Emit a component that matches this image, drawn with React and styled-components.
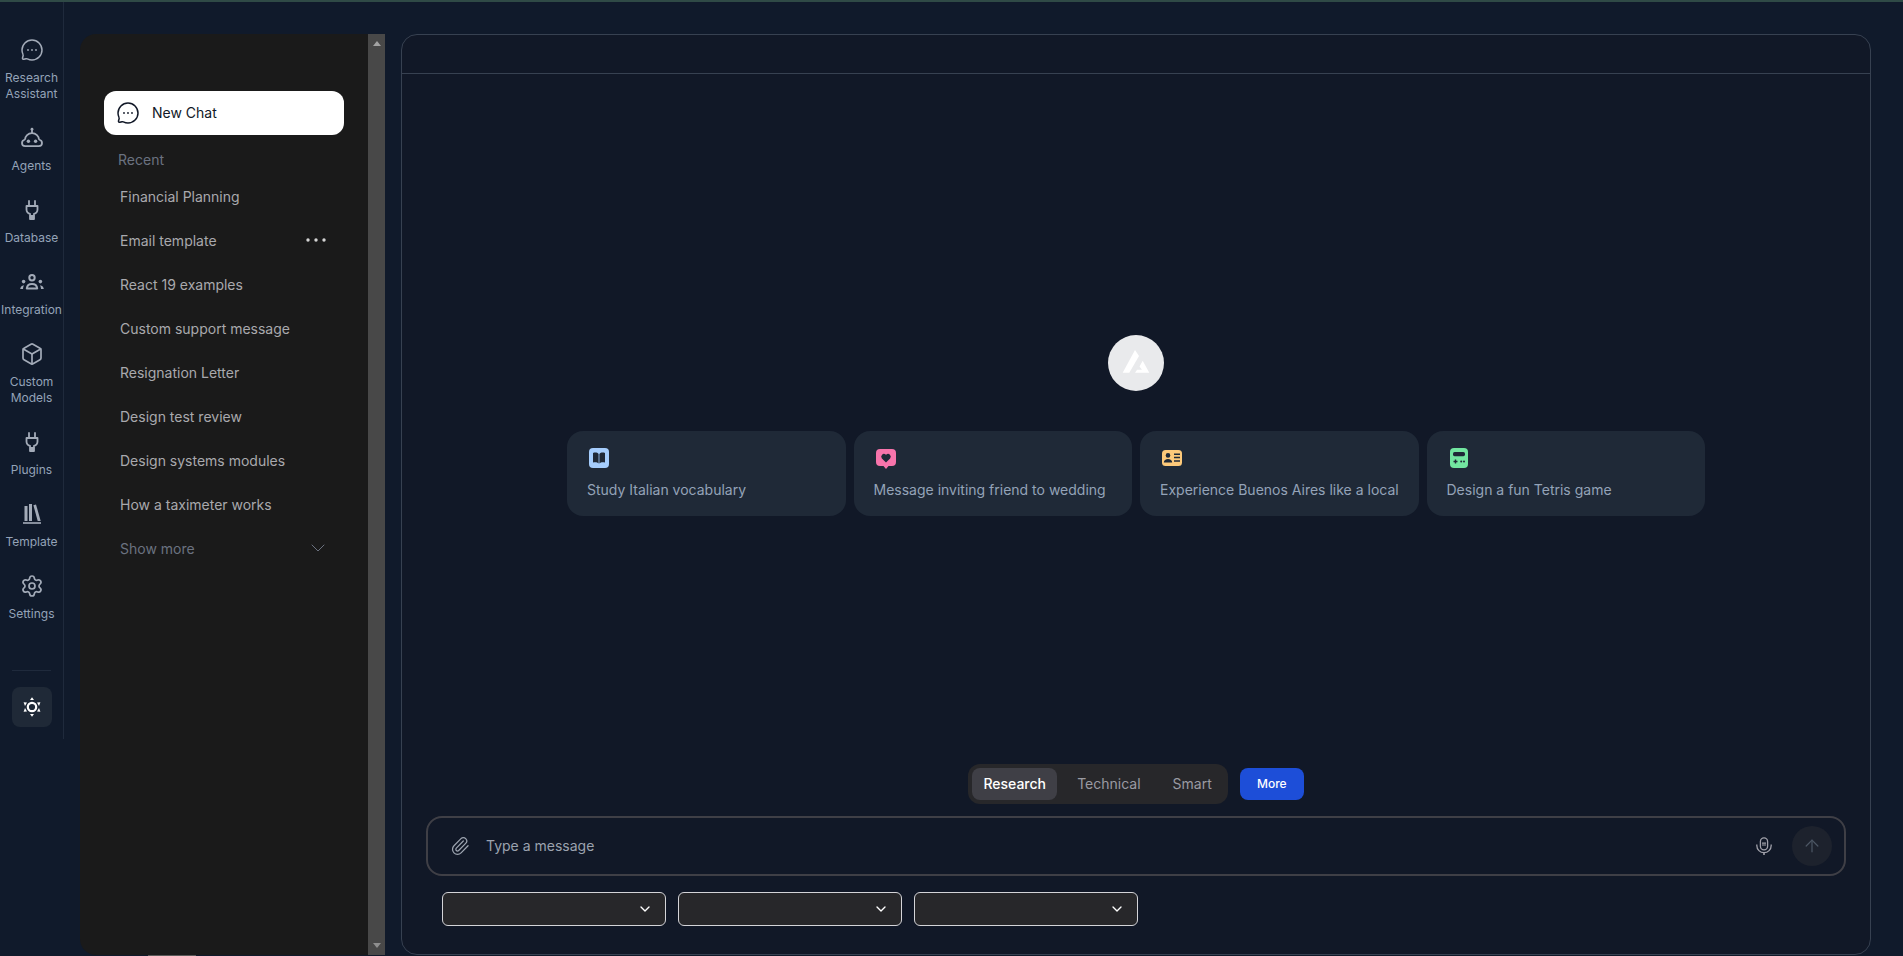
import React from "react";
import styled, { createGlobalStyle } from "styled-components";
import { Box, Settings, Paperclip, ArrowUp, ChevronDown } from "lucide-react";

const Global = createGlobalStyle`
  html, body { margin: 0; padding: 0; height: 100%; overflow: hidden; background: #101a2b; }
  body { font-family: "Inter", "Liberation Sans", sans-serif; }
  * { box-sizing: border-box; }
  button { font-family: inherit; border: 0; padding: 0; }
`;

const Page = styled.div`
  height: 956px;
  display: flex;
  flex-direction: column;
`;
const TopStrip = styled.div`
  height: 2px;
  flex: none;
  background: #2f4a46;
`;
const Layout = styled.div`
  flex: 1;
  display: flex;
  align-items: flex-start;
  min-height: 0;
`;
const Rail = styled.nav`
  width: 64px;
  flex: none;
  border-right: 1px solid #1f2a3c;
  padding: 36px 0 12px;
  display: flex;
  flex-direction: column;
  align-items: center;
`;
const RailList = styled.div`
  display: flex;
  flex-direction: column;
  align-items: center;
  gap: 24px;
  width: 100%;
`;
const RailItem = styled.div`
  display: flex;
  flex-direction: column;
  align-items: center;
  gap: 8px;
  color: #a3abb8;
  width: 100%;
`;
const RailLabel = styled.span`
  font-size: 12px;
  line-height: 16px;
  color: #94a3b8;
  text-align: center;
  white-space: pre-line;
`;
const RailDivider = styled.div`
  width: 39px;
  height: 1px;
  background: #1f2a3c;
  margin: 48px 0 16px;
`;
const ThemeButton = styled.button`
  width: 40px;
  height: 40px;
  border-radius: 8px;
  background: #1f2937;
  color: #fff;
  display: flex;
  align-items: center;
  justify-content: center;
`;
const SideColumn = styled.div`
  flex: none;
  margin: 32px 16px 0;
  width: 305px;
`;
const SidePanel = styled.aside`
  height: 921px;
  display: flex;
  border-radius: 16px 0 0 16px;
  overflow: hidden;
  background: #1a1a1a;
`;
const SideContent = styled.div`
  flex: 1;
  padding: 57px 24px 0;
  min-width: 0;
`;
const NewChat = styled.button`
  width: 240px;
  height: 44px;
  border-radius: 12px;
  background: #fff;
  color: #111827;
  display: flex;
  align-items: center;
  gap: 12px;
  padding-left: 12px;
  font-size: 14px;
  font-weight: 400;
  line-height: 20px;
`;
const RecentLabel = styled.div`
  font-size: 14px;
  line-height: 20px;
  color: #6b7280;
  margin: 15px 0 4px 14px;
`;
const HistoryRow = styled.div`
  height: 44px;
  display: flex;
  align-items: center;
  justify-content: space-between;
  padding: 0 16px;
  font-size: 14px;
  color: ${(p) => (p.$muted ? "#6b7280" : "#a9a9ad")};
`;
const RowIcon = styled.span`
  width: 24px;
  height: 24px;
  display: flex;
  align-items: center;
  justify-content: center;
  margin-right: ${(p) => (p.$muted ? "-2px" : "0")};
  color: ${(p) => (p.$muted ? "#6b7280" : "#d4d4d4")};
`;
const Scrollbar = styled.div`
  width: 17px;
  flex: none;
  background: #484848;
  display: flex;
  flex-direction: column;
  justify-content: space-between;
  align-items: center;
  padding: 7px 0;
`;
const ScrollArrow = styled.span`
  width: 0;
  height: 0;
  border-left: 4px solid transparent;
  border-right: 4px solid transparent;
  ${(p) => (p.$down ? "border-top: 5px solid #8f8f8f;" : "border-bottom: 5px solid #a3a3a3;")}
`;
const BottomThumb = styled.div`
  width: 48px;
  height: 1px;
  margin-left: 68px;
  background: #5a5a5a;
`;
const Main = styled.main`
  flex: none;
  width: 1470px;
  height: 921px;
  margin-top: 32px;
  border: 1px solid #374151;
  border-radius: 16px;
  background: #111827;
  display: flex;
  flex-direction: column;
  overflow: hidden;
`;
const MainHeader = styled.div`
  height: 39px;
  flex: none;
  border-bottom: 1px solid #374151;
`;
const Stage = styled.div`
  flex: 1;
  display: flex;
  flex-direction: column;
  align-items: center;
  padding-top: 261px;
  min-height: 0;
`;
const LogoDisc = styled.div`
  width: 56px;
  height: 56px;
  border-radius: 50%;
  background: #e9eaec;
  margin-bottom: 40px;
`;
const Cards = styled.div`
  display: flex;
  gap: 8px;
`;
const Card = styled.div`
  width: 278.5px;
  height: 85px;
  border-radius: 16px;
  background: #1f2937;
  padding: 15px 20px 0;
`;
const CardIcon = styled.div`
  width: 24px;
  height: 24px;
  margin-bottom: 10px;
`;
const CardText = styled.div`
  font-size: 14px;
  line-height: 20px;
  color: #94a3b8;
  white-space: nowrap;
`;
const Composer = styled.div`
  flex: none;
  padding: 0 24px 28px;
`;
const ModeRow = styled.div`
  display: flex;
  justify-content: center;
  align-items: center;
  gap: 12px;
  margin-bottom: 12px;
`;
const ModeTabs = styled.div`
  height: 40px;
  padding: 4px;
  background: #27272a;
  border-radius: 12px;
  display: flex;
  gap: 8px;
`;
const ModeTab = styled.button`
  height: 32px;
  padding: 0 ${(p) => (p.$active ? "11.2px" : "12px")};
  border-radius: 8px;
  font-size: 14px;
  line-height: 18px;
  font-weight: ${(p) => (p.$active ? 500 : 400)};
  color: ${(p) => (p.$active ? "#fff" : "#9a9aa2")};
  background: ${(p) => (p.$active ? "#3f3f46" : "transparent")};
`;
const MoreButton = styled.button`
  width: 64px;
  height: 32px;
  border-radius: 8px;
  background: #1d4ed8;
  color: #fff;
  font-size: 12px;
  line-height: 14px;
  font-weight: 500;
`;
const InputBar = styled.div`
  height: 60px;
  border: 2px solid #3f3f46;
  border-radius: 16px;
  display: flex;
  align-items: center;
  padding: 0 12px 0 22px;
  color: #9ca3af;
`;
const Placeholder = styled.span`
  flex: 1;
  margin-left: 16px;
  font-size: 14px;
  line-height: 18px;
  color: #9ca3af;
`;
const SendButton = styled.button`
  width: 40px;
  height: 40px;
  border-radius: 50%;
  background: #1d222d;
  color: #4b5563;
  margin-left: 18px;
  display: flex;
  align-items: center;
  justify-content: center;
`;
const Selects = styled.div`
  display: flex;
  gap: 12px;
  margin-top: 16px;
  padding-left: 16px;
`;
const SelectBox = styled.button`
  width: 224px;
  height: 34px;
  background: #27272a;
  border: 1px solid #d4d4d8;
  border-radius: 6px;
  color: #fff;
  display: flex;
  align-items: center;
  justify-content: flex-end;
  padding-right: 12px;
`;

const ChatIcon = ({ color = "currentColor" }) => (
  <svg width="24" height="24" viewBox="0 0 24 24" fill="none" stroke={color} strokeWidth="1.5">
    <path d="M12 22C17.5 22 22 17.5 22 12S17.5 2 12 2 2 6.5 2 12c0 1.6.4 3.1 1 4.5.2.4.2.8.1 1.2l-.6 2.3c-.2.8.5 1.5 1.3 1.3l2.3-.6c.4-.1.8-.1 1.2.1C8.9 21.6 10.4 22 12 22Z" strokeLinejoin="round" />
    <circle cx="8" cy="12" r=".9" fill={color} stroke="none" />
    <circle cx="12" cy="12" r=".9" fill={color} stroke="none" />
    <circle cx="16" cy="12" r=".9" fill={color} stroke="none" />
  </svg>
);
const RobotIcon = () => (
  <svg width="24" height="24" viewBox="0 0 24 24" fill="none" stroke="currentColor" strokeWidth="1.8">
    <circle cx="12" cy="3.2" r="1.4" fill="currentColor" stroke="none" />
    <path d="M12 4v3.5" />
    <path d="M5 13.8a7 6.6 0 0 1 14 0" />
    <path d="M5 13.5c-1.8.5-3 1.9-3 3.5 0 1.8 1.4 3.2 3.2 3.2h13.6c1.8 0 3.2-1.4 3.2-3.2 0-1.6-1.2-3-3-3.5" />
    <circle cx="8.4" cy="15.2" r="1.7" fill="currentColor" stroke="none" />
    <circle cx="15.6" cy="15.2" r="1.7" fill="currentColor" stroke="none" />
  </svg>
);
const PlugIcon = () => (
  <svg width="24" height="24" viewBox="0 0 24 24" fill="none" stroke="currentColor" strokeWidth="1.8" strokeLinejoin="round">
    <path d="M9 3v5M15 3v5" strokeLinecap="round" />
    <path d="M6.5 8h11v3.5c0 2-1.5 3.8-3.5 4.3V21h-4v-5.2c-2-.5-3.5-2.3-3.5-4.3Z" />
    <path d="M10 17h4v4h-4z" fill="currentColor" stroke="none" />
  </svg>
);
const TeamIcon = () => (
  <svg width="24" height="24" viewBox="0 0 24 24" fill="none" stroke="currentColor" strokeWidth="2">
    <circle cx="12" cy="7.8" r="2.7" />
    <circle cx="3.6" cy="11.6" r="1.8" fill="currentColor" stroke="none" />
    <circle cx="20.4" cy="11.6" r="1.8" fill="currentColor" stroke="none" />
    <path d="M6.8 18.4c.3-2.6 2.5-4.3 5.2-4.3s4.9 1.7 5.2 4.3Z" strokeLinejoin="round" />
    <path d="M.2 19c.1-2 1.4-3.6 3.8-3.8-.6 1.1-1 2.4-1 3.8ZM23.8 19c-.1-2-1.4-3.6-3.8-3.8.6 1.1 1 2.4 1 3.8Z" fill="currentColor" stroke="none" />
  </svg>
);
const BooksIcon = () => (
  <svg width="24" height="24" viewBox="0 0 24 24" fill="currentColor">
    <rect x="4.5" y="4" width="3" height="15" />
    <rect x="9" y="2" width="3" height="17" />
    <path d="M13.4 3.2 16 2.4 20.7 19h-3Z" />
    <rect x="3" y="20.2" width="18" height="1.6" />
  </svg>
);
const SunIcon = () => (
  <svg width="24" height="24" viewBox="0 0 24 24" fill="none" stroke="currentColor" strokeWidth="2.2">
    <circle cx="12" cy="12" r="4.2" />
    <g fill="currentColor" stroke="none">
      <path d="M12 2.2 14 5h-4Z" />
      <path d="M12 21.8 14 19h-4Z" />
      <path d="M3.6 7.2 7 7.5l-2 3.4Z" />
      <path d="M20.4 7.2 17 7.5l2 3.4Z" />
      <path d="M3.6 16.8 7 16.5l-2-3.4Z" />
      <path d="M20.4 16.8 17 16.5l2-3.4Z" />
    </g>
  </svg>
);
const DotsIcon = () => (
  <svg width="24" height="24" viewBox="0 0 24 24" fill="currentColor">
    <circle cx="4" cy="12" r="1.7" />
    <circle cx="12" cy="12" r="1.7" />
    <circle cx="20" cy="12" r="1.7" />
  </svg>
);
const MicIcon = () => (
  <svg width="20" height="20" viewBox="0 0 20 20" fill="none" stroke="#a1a1aa" strokeWidth="1.3">
    <rect x="6.4" y="1.8" width="7.2" height="12" rx="3.6" />
    <path d="M8 7.2h4M8 9h4" strokeWidth="1.2" />
    <path d="M2.8 8.5v1a7.2 7.2 0 0 0 14.4 0v-1" />
    <path d="M10 16.7v2.4" strokeWidth="1.6" />
  </svg>
);
const LogoMark = () => (
  <svg width="56" height="56" viewBox="0 0 56 56" fill="#fff">
    <path d="M27 15 14.7 37.7h6.6L31 21Z" />
    <path d="M27 37.7h14.3l-6.6-12-3.2 5.8 2.5 3.2h-4.9Z" />
  </svg>
);
const BookTile = () => (
  <svg width="24" height="24" viewBox="0 0 24 24">
    <rect x="2" y="2" width="20" height="20" rx="4" fill="#a5cdfd" />
    <path d="M6 7c2.2-.7 4.4-.5 5.6 1v9.4c-1.2-1.2-3.4-1.5-5.6-.9ZM18 7c-2.2-.7-4.4-.5-5.6 1v9.4c1.2-1.2 3.4-1.5 5.6-.9Z" fill="#1f2937" />
  </svg>
);
const HeartTile = () => (
  <svg width="24" height="24" viewBox="0 0 24 24">
    <path d="M6 3h12a4 4 0 0 1 4 4v9a4 4 0 0 1-4 4h-3.5L12 23l-2.5-3H6a4 4 0 0 1-4-4V7a4 4 0 0 1 4-4Z" fill="#f774ab" />
    <path d="M12 16.6 7.9 12.4a2.7 2.7 0 0 1 3.8-3.8l.3.3.3-.3a2.7 2.7 0 0 1 3.8 3.8Z" fill="#1f2937" />
  </svg>
);
const IdTile = () => (
  <svg width="24" height="24" viewBox="0 0 24 24">
    <rect x="2" y="4" width="20" height="16" rx="3.5" fill="#fdc97a" />
    <circle cx="8" cy="9.4" r="2.3" fill="#1f2937" />
    <path d="M3.8 16.6c0-2.4 2-3.6 4.2-3.6s4.2 1.2 4.2 3.6Z" fill="#1f2937" />
    <path d="M14 8.2h6M14 11.6h6M14 15h6" stroke="#1f2937" strokeWidth="1.5" />
  </svg>
);
const GameTile = () => (
  <svg width="24" height="24" viewBox="0 0 24 24">
    <rect x="3" y="2" width="18" height="20" rx="4" fill="#72e6a0" />
    <rect x="6" y="6" width="12" height="4.2" rx="1.6" fill="#1f2937" />
    <path d="M8.5 13.5v4M6.5 15.5h4" stroke="#1f2937" strokeWidth="1.4" />
    <circle cx="14.2" cy="15.5" r="1" fill="#1f2937" />
    <circle cx="17" cy="15.5" r="1" fill="#1f2937" />
  </svg>
);

const railItems = [
  { label: "Research\nAssistant", icon: <ChatIcon /> },
  { label: "Agents", icon: <RobotIcon /> },
  { label: "Database", icon: <PlugIcon /> },
  { label: "Integration", icon: <TeamIcon /> },
  { label: "Custom\nModels", icon: <Box size={24} strokeWidth={1.7} /> },
  { label: "Plugins", icon: <PlugIcon /> },
  { label: "Template", icon: <BooksIcon /> },
  { label: "Settings", icon: <Settings size={24} strokeWidth={1.7} /> },
];
const history = [
  "Financial Planning",
  "Email template",
  "React 19 examples",
  "Custom support message",
  "Resignation Letter",
  "Design test review",
  "Design systems modules",
  "How a taximeter works",
];
const suggestions = [
  { text: "Study Italian vocabulary", icon: <BookTile /> },
  { text: "Message inviting friend to wedding", icon: <HeartTile /> },
  { text: "Experience Buenos Aires like a local", icon: <IdTile /> },
  { text: "Design a fun Tetris game", icon: <GameTile /> },
];

export default function App() {
  return (
    <Page>
      <Global />
      <TopStrip />
      <Layout>
        <Rail>
          <RailList>
            {railItems.map((item) => (
              <RailItem key={item.label}>
                {item.icon}
                <RailLabel>{item.label}</RailLabel>
              </RailItem>
            ))}
          </RailList>
          <RailDivider />
          <ThemeButton aria-label="Theme">
            <SunIcon />
          </ThemeButton>
        </Rail>
        <SideColumn>
          <SidePanel>
            <SideContent>
              <NewChat>
                <ChatIcon />
                New Chat
              </NewChat>
              <RecentLabel>Recent</RecentLabel>
              {history.map((title) => (
                <HistoryRow key={title}>
                  {title}
                  {title === "Email template" && (
                    <RowIcon>
                      <DotsIcon />
                    </RowIcon>
                  )}
                </HistoryRow>
              ))}
              <HistoryRow $muted>
                Show more
                <RowIcon $muted>
                  <ChevronDown size={24} strokeWidth={1} />
                </RowIcon>
              </HistoryRow>
            </SideContent>
            <Scrollbar>
              <ScrollArrow />
              <ScrollArrow $down />
            </Scrollbar>
          </SidePanel>
          <BottomThumb />
        </SideColumn>
        <Main>
          <MainHeader />
          <Stage>
            <LogoDisc>
              <LogoMark />
            </LogoDisc>
            <Cards>
              {suggestions.map((s) => (
                <Card key={s.text}>
                  <CardIcon>{s.icon}</CardIcon>
                  <CardText>{s.text}</CardText>
                </Card>
              ))}
            </Cards>
          </Stage>
          <Composer>
            <ModeRow>
              <ModeTabs>
                <ModeTab $active>Research</ModeTab>
                <ModeTab>Technical</ModeTab>
                <ModeTab>Smart</ModeTab>
              </ModeTabs>
              <MoreButton>More</MoreButton>
            </ModeRow>
            <InputBar>
              <Paperclip size={20} strokeWidth={1.5} />
              <Placeholder>Type a message</Placeholder>
              <MicIcon />
              <SendButton aria-label="Send">
                <ArrowUp size={20} strokeWidth={1.5} />
              </SendButton>
            </InputBar>
            <Selects>
              {[0, 1, 2].map((i) => (
                <SelectBox key={i} aria-label="Select">
                  <ChevronDown size={16} />
                </SelectBox>
              ))}
            </Selects>
          </Composer>
        </Main>
      </Layout>
    </Page>
  );
}
